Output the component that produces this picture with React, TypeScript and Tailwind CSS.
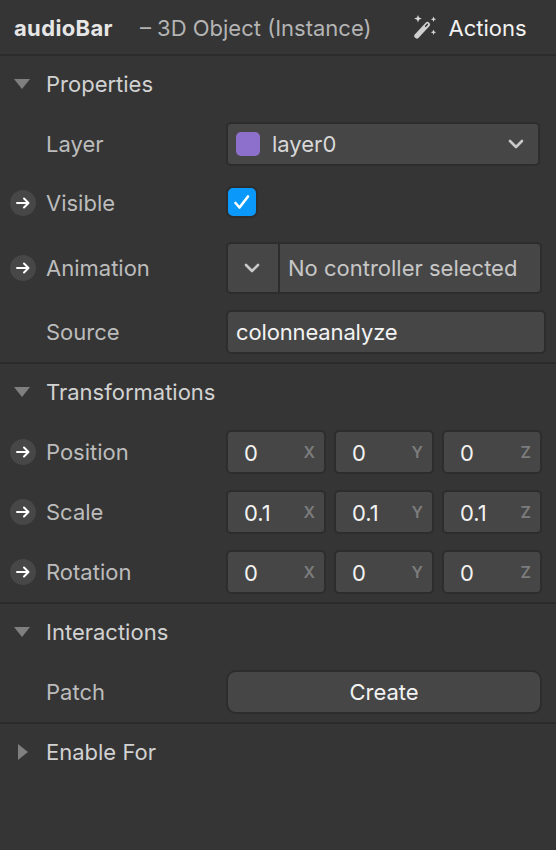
const font = { fontFamily: "Inter, 'Noto Sans', sans-serif" };

function Arrow() {
  return (
    <div className="absolute left-[10px] top-1/2 flex h-[26px] w-[26px] -translate-y-1/2 items-center justify-center rounded-full bg-[#474747]">
      <svg width="14" height="12" viewBox="0 0 14 12" fill="none" stroke="#ffffff" strokeWidth="2" strokeLinecap="round" strokeLinejoin="round">
        <path d="M1 6h11.5M8 1.5 12.5 6 8 10.5" />
      </svg>
    </div>
  );
}

function Chevron() {
  return (
    <svg width="16" height="10" viewBox="0 0 16 10" fill="none" stroke="#c9c9c9" strokeWidth="2.6" strokeLinecap="round" strokeLinejoin="round">
      <path d="M2 2l6 6 6-6" />
    </svg>
  );
}

function Down() {
  return <div className="ml-[14px] h-0 w-0 border-x-[8px] border-t-[10px] border-x-transparent border-t-[#7f7f7f]" />;
}

function Right() {
  return <div className="ml-[18px] h-0 w-0 border-y-[8px] border-l-[10px] border-y-transparent border-l-[#7f7f7f]" />;
}

function SectionHead({ title, open = true }: { title: string; open?: boolean }) {
  return (
    <div className="flex h-[56px] items-center">
      <div className="w-[46px]">{open ? <Down /> : <Right />}</div>
      <span className="text-[22px] leading-[28px] text-[#d2d2d2]">{title}</span>
    </div>
  );
}

function Row({ label, arrow, h, children }: { label: string; arrow?: boolean; h: string; children: React.ReactNode }) {
  return (
    <div className={`relative flex items-center ${h}`}>
      {arrow && <Arrow />}
      <span className="w-[226px] pl-[46px] text-[22px] leading-[28px] text-[#bcbcbc]">{label}</span>
      {children}
    </div>
  );
}

function Axis({ value, axis }: { value: string; axis: string }) {
  return (
    <div className="flex h-[44px] w-[100px] items-center justify-between rounded-[5px] border-2 border-[#2d2d2d] bg-[#464646] pl-[16px] pr-[9px]">
      <span className="mt-[1px] text-[22px] leading-[28px] text-[#f2f2f2]">{value}</span>
      <span className="text-[16px] leading-[20px] font-semibold text-[#7c7c7c]">{axis}</span>
    </div>
  );
}

function Triple({ label, v }: { label: string; v: string }) {
  return (
    <Row label={label} arrow h="h-[60px]">
      <div className="flex gap-[8px]">
        <Axis value={v} axis="X" />
        <Axis value={v} axis="Y" />
        <Axis value={v} axis="Z" />
      </div>
    </Row>
  );
}

export default function App() {
  return (
    <div style={font} className="h-[850px] w-[556px] overflow-hidden bg-[#353535]">
      <div className="flex h-[56px] items-center border-b-2 border-[#2b2b2b] pt-[2px]">
        <span className="ml-[14px] text-[22px] leading-[28px] font-bold tracking-[0.35px] text-[#e6e6e6]">audioBar</span>
        <span className="ml-[27px] text-[22px] leading-[28px] text-[#b4b4b4]">– 3D Object (Instance)</span>
        <svg className="ml-[42px] -mt-[2px]" width="24" height="24" viewBox="0 0 24 24">
          <path d="M2.8 21 13.5 9.5" stroke="#cfcfcf" strokeWidth="5" strokeLinecap="round" />
          <path d="M11.6 11.2 13.4 9.2" stroke="#353535" strokeWidth="1.5" strokeLinecap="round" />
          <path d="M4 0l1 2.6L7.8 3.6 5 4.7 4 7.4 3 4.7.2 3.6 3 2.6z" fill="#d8d8d8" />
          <path d="M19.5 1.5l.8 1.9 1.9.8-1.9.8-.8 1.9-.8-1.9-1.9-.8 1.9-.8z" fill="#d8d8d8" />
          <path d="M19.5 14.5l.8 1.9 1.9.8-1.9.8-.8 1.9-.8-1.9-1.9-.8 1.9-.8z" fill="#d8d8d8" />
        </svg>
        <span className="ml-[11px] text-[22px] leading-[28px] text-[#f2f2f2]">Actions</span>
      </div>

      <section className="border-b-2 border-[#2b2b2b]">
        <SectionHead title="Properties" />
        <Row label="Layer" h="h-[64px]">
          <div className="flex h-[44px] w-[314px] items-center rounded-[5px] border-2 border-[#2d2d2d] bg-[#464646] pl-[8px] pr-[14px]">
            <div className="h-[24px] w-[24px] rounded-[5px] bg-[#8c70cc]" />
            <span className="ml-[12px] flex-1 text-[22px] leading-[28px] text-[#d8d8d8]">layer0</span>
            <Chevron />
          </div>
        </Row>
        <Row label="Visible" arrow h="h-[54px]">
          <div className="mb-[2px] flex h-[32px] w-[32px] items-center justify-center rounded-[7px] border-2 border-[#2d2d2d] bg-[#0a98fb]">
            <svg width="18" height="16" viewBox="0 0 18 16" fill="none" stroke="#ffffff" strokeWidth="2.6" strokeLinecap="round" strokeLinejoin="round">
              <path d="M2.5 9l4 4.5L15 2.5" />
            </svg>
          </div>
        </Row>
        <Row label="Animation" arrow h="h-[76px]">
          <div className="flex h-[52px] w-[316px] rounded-[5px] border-2 border-[#2d2d2d] bg-[#464646]">
            <div className="flex w-[52px] items-center justify-center border-r-2 border-[#2d2d2d] pr-[2px]">
              <Chevron />
            </div>
            <span className="flex flex-1 items-center pl-[8px] text-[22px] leading-[28px] text-[#c6c6c6]">No controller selected</span>
          </div>
        </Row>
        <Row label="Source" h="h-[52px]">
          <div className="flex h-[44px] w-[320px] items-center rounded-[5px] border-2 border-[#2d2d2d] bg-[#464646] pl-[8px]">
            <span className="text-[22px] leading-[28px] tracking-[-0.14px] text-[#f2f2f2]">colonneanalyze</span>
          </div>
        </Row>
        <div className="h-[4px]" />
      </section>

      <section className="border-b-2 border-[#2b2b2b]">
        <SectionHead title="Transformations" />
        <div className="pt-[2px]">
          <Triple label="Position" v="0" />
          <Triple label="Scale" v="0.1" />
          <Triple label="Rotation" v="0" />
        </div>
      </section>

      <section className="border-b-2 border-[#2b2b2b]">
        <SectionHead title="Interactions" />
        <div className="pt-[2px]">
          <Row label="Patch" h="h-[60px]">
            <div className="flex h-[44px] w-[316px] items-center justify-center rounded-[10px] border-2 border-[#2d2d2d] bg-[#464646] text-[22px] leading-[28px] text-[#f2f2f2]">
              Create
            </div>
          </Row>
        </div>
      </section>

      <section>
        <SectionHead title="Enable For" open={false} />
      </section>
    </div>
  );
}
